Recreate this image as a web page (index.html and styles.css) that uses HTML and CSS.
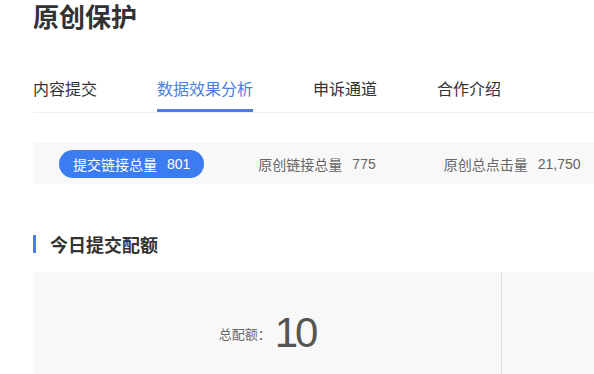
FILE: index.html
```html
<!DOCTYPE html>
<html lang="zh-CN">
<head>
    <meta charset="UTF-8">
    <meta name="viewport" content="width=device-width, initial-scale=1.0">
    <title>原创保护</title>
    <link rel="stylesheet" href="styles.css">
</head>
<body>

<div class="page">
    <h1 class="title">原创保护</h1>

    <div class="tabs">
        <div class="tab">内容提交</div>
        <div class="tab active">数据效果分析</div>
        <div class="tab">申诉通道</div>
        <div class="tab">合作介绍</div>
    </div>

    <div class="stats">
        <div class="stat current"><span>提交链接总量</span><span class="num">801</span></div>
        <div class="stat"><span>原创链接总量</span><span class="num">775</span></div>
        <div class="stat"><span>原创总点击量</span><span class="num">21,750</span></div>
    </div>

    <h2 class="section-title">今日提交配额</h2>

    <div class="quota">
        <div class="quota-card">
            <span class="label">总配额：</span><span class="value">10</span>
        </div>
        <div class="quota-card"></div>
    </div>
</div>

</body>
</html>
```

FILE: styles.css
```css
body {
    font-family: "Noto Sans CJK SC", "Liberation Sans", sans-serif;
    margin: 0;
    padding: 0;
    background: #fff;
    color: #333;
    overflow: hidden;
}
.page {
    padding-left: 33px;
    width: 1000px;
}
.title {
    margin: 0;
    font-size: 26px;
    line-height: 32px;
    font-weight: bold;
    color: #333;
}
.tabs {
    display: flex;
    gap: 60px;
    margin-top: 44px;
    border-bottom: 1px solid #eee;
}
.tab {
    font-size: 16px;
    line-height: 24px;
    padding-bottom: 9px;
    border-bottom: 3px solid transparent;
    color: #333;
}
.tab.active {
    color: #4a7fe0;
    border-bottom-color: #4a7fe0;
}
.stats {
    display: flex;
    align-items: center;
    gap: 40px;
    margin-top: 30px;
    height: 41px;
    padding-left: 26px;
    background: #f8f8f8;
}
.stat {
    display: flex;
    gap: 10px;
    font-size: 14px;
    line-height: 28px;
    padding: 0 14px;
    color: #666;
}
.stat .num {
    font-family: "Liberation Sans", sans-serif;
}
.stat.current {
    background: #3b7cf0;
    color: #fff;
    border-radius: 14px;
}
.section-title {
    margin: 51px 0 0;
    font-size: 18px;
    line-height: 18px;
    font-weight: bold;
    color: #333;
    padding-left: 14px;
    border-left: 3px solid #4a7fe0;
}
.quota {
    display: flex;
    margin-top: 19px;
}
.quota-card {
    width: 468px;
    height: 122px;
    background: #f8f8f8;
    border-right: 1px solid #e0e0e0;
    display: flex;
    align-items: center;
    justify-content: center;
    gap: 4px;
}
.label {
    font-size: 13px;
    color: #666;
}
.value {
    font-family: "Liberation Sans", sans-serif;
    font-size: 42px;
    letter-spacing: -3px;
    color: #555;
}
```
